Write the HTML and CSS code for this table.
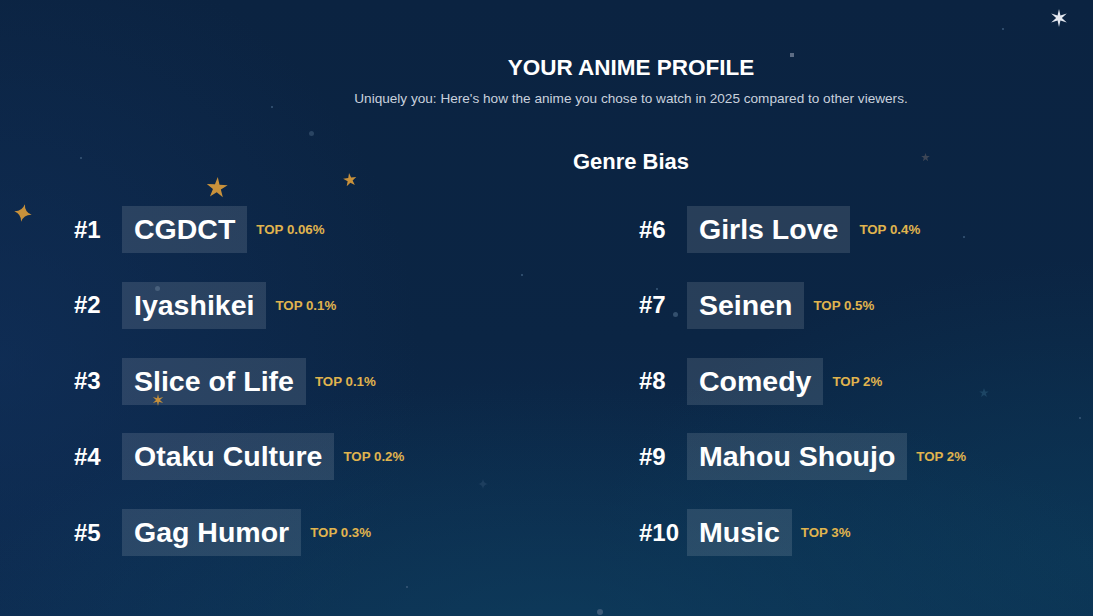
FILE: index.html
```html
<!DOCTYPE html>
<html lang="en">
<head>
<meta charset="utf-8">
<title>Your Anime Profile</title>
<link rel="stylesheet" href="styles.css">
</head>
<body>
<div class="page">
  <div class="sky" aria-hidden="true">
    <svg class="deco star5 g1" viewBox="-10 -10 20 20"><polygon points="0,-10 2.1,-3.2 9.51,-3.09 3.6,1.2 5.88,8.09 0,3.8 -5.88,8.09 -3.6,1.2 -9.51,-3.09 -2.1,-3.2"/></svg>
    <svg class="deco star5 g2" viewBox="-10 -10 20 20"><polygon points="0,-10 2.1,-3.2 9.51,-3.09 3.6,1.2 5.88,8.09 0,3.8 -5.88,8.09 -3.6,1.2 -9.51,-3.09 -2.1,-3.2"/></svg>
    <svg class="deco spark g3" viewBox="-10 -10 20 20"><path d="M0 -10 Q1.4 -1.4 10 0 Q1.4 1.4 0 10 Q-1.4 1.4 -10 0 Q-1.4 -1.4 0 -10Z"/></svg>
    <svg class="deco star6 w1" viewBox="-10 -10 20 20"><polygon points="0,-10 1.6,-2.8 8.66,-5 3.2,0 8.66,5 1.6,2.8 0,10 -1.6,2.8 -8.66,5 -3.2,0 -8.66,-5 -1.6,-2.8"/></svg>
    <svg class="deco star5 d1" viewBox="-10 -10 20 20"><polygon points="0,-10 2.35,-3.24 9.51,-3.09 3.8,1.24 5.88,8.09 0,4 -5.88,8.09 -3.8,1.24 -9.51,-3.09 -2.35,-3.24"/></svg>
    <svg class="deco star5 d2" viewBox="-10 -10 20 20"><polygon points="0,-10 2.35,-3.24 9.51,-3.09 3.8,1.24 5.88,8.09 0,4 -5.88,8.09 -3.8,1.24 -9.51,-3.09 -2.35,-3.24"/></svg>
    <svg class="deco spark d3" viewBox="-10 -10 20 20"><path d="M0 -10 Q1.4 -1.4 10 0 Q1.4 1.4 0 10 Q-1.4 1.4 -10 0 Q-1.4 -1.4 0 -10Z"/></svg>
    <svg class="deco star6 d4" viewBox="-10 -10 20 20"><polygon points="0,-10 1.6,-2.8 8.66,-5 3.2,0 8.66,5 1.6,2.8 0,10 -1.6,2.8 -8.66,5 -3.2,0 -8.66,-5 -1.6,-2.8"/></svg>
    <span class="dot p1"></span><span class="dot p2"></span><span class="dot p3"></span>
    <span class="dot p4"></span><span class="dot p5"></span><span class="dot p6"></span>
    <span class="dot p7"></span><span class="dot p8"></span><span class="dot p9"></span>
    <span class="dot p10"></span><span class="dot p11"></span><span class="dot p12"></span>
    <span class="dot p13"></span>
  </div>

  <header class="head">
    <h1 class="title">YOUR ANIME PROFILE</h1>
    <p class="subtitle">Uniquely you: Here's how the anime you chose to watch in 2025 compared to other viewers.</p>
    <h2 class="section">Genre Bias</h2>
  </header>

  <main class="genres">
    <ol class="col">
      <li class="row"><span class="rank">#1</span><span class="name">CGDCT</span><span class="top">TOP 0.06%</span></li>
      <li class="row"><span class="rank">#2</span><span class="name">Iyashikei</span><span class="top">TOP 0.1%</span></li>
      <li class="row"><span class="rank">#3</span><span class="name">Slice of Life</span><span class="top">TOP 0.1%</span></li>
      <li class="row"><span class="rank">#4</span><span class="name">Otaku Culture</span><span class="top">TOP 0.2%</span></li>
      <li class="row"><span class="rank">#5</span><span class="name">Gag Humor</span><span class="top">TOP 0.3%</span></li>
    </ol>
    <ol class="col">
      <li class="row"><span class="rank">#6</span><span class="name">Girls Love</span><span class="top">TOP 0.4%</span></li>
      <li class="row"><span class="rank">#7</span><span class="name">Seinen</span><span class="top">TOP 0.5%</span></li>
      <li class="row"><span class="rank">#8</span><span class="name">Comedy</span><span class="top">TOP 2%</span></li>
      <li class="row"><span class="rank">#9</span><span class="name">Mahou Shoujo</span><span class="top">TOP 2%</span></li>
      <li class="row"><span class="rank">#10</span><span class="name">Music</span><span class="top">TOP 3%</span></li>
    </ol>
  </main>
</div>
</body>
</html>
```

FILE: styles.css
```css
* { box-sizing: border-box; }

html, body {
  margin: 0;
  padding: 0;
  width: 1093px;
  height: 616px;
  overflow: hidden;
  font-family: "Liberation Sans", Arial, sans-serif;
  color: #ffffff;
}

.page {
  position: relative;
  width: 1093px;
  height: 616px;
  overflow: hidden;
  background:
    radial-gradient(ellipse 620px 260px at 560px 640px, rgba(14, 70, 100, 0.55), rgba(14, 70, 100, 0) 100%),
    radial-gradient(ellipse 500px 300px at 1093px 560px, rgba(12, 62, 92, 0.6), rgba(12, 62, 92, 0) 100%),
    radial-gradient(ellipse 420px 420px at 0px 360px, rgba(18, 50, 96, 0.55), rgba(18, 50, 96, 0) 100%),
    linear-gradient(180deg, #0b2341 0%, #0b2544 55%, #0c2b4e 100%);
}

/* decorative sky layer */
.sky {
  position: absolute;
  inset: 0;
  pointer-events: none;
  z-index: 2;
}

.deco { position: absolute; display: block; }
.g1, .g2, .g3, .d4 { fill: #c8913b; }
.g1 { left: 206px; top: 177px; width: 22px; height: 22px; transform: rotate(4deg); }
.g2 { left: 343px; top: 173px; width: 14px; height: 14px; transform: rotate(-8deg); }
.g3 { left: 14px; top: 203px; width: 18px; height: 20px; transform: rotate(12deg); }
.d4 { left: 152px; top: 394px; width: 12px; height: 12px; }
.w1 { left: 1050px; top: 7px; width: 18px; height: 22px; fill: #e4e8f0; }
.d1 { left: 921px; top: 153px; width: 9px; height: 9px; fill: #3d4656; }
.d2 { left: 979px; top: 388px; width: 10px; height: 10px; fill: #1d4564; }
.d3 { left: 478px; top: 479px; width: 10px; height: 10px; fill: #1d3e5e; }

.dot {
  position: absolute;
  border-radius: 50%;
  background: #3a5878;
}
.p1 { left: 790px; top: 53px; width: 4px; height: 4px; background: #5c6c84; border-radius: 0; }
.p2 { left: 309px; top: 131px; width: 5px; height: 5px; background: #2a4462; }
.p3 { left: 271px; top: 106px; width: 2px; height: 2px; }
.p4 { left: 155px; top: 286px; width: 5px; height: 5px; background: #48607c; }
.p5 { left: 673px; top: 312px; width: 5px; height: 5px; background: #34506e; }
.p6 { left: 1079px; top: 417px; width: 2px; height: 2px; }
.p7 { left: 597px; top: 609px; width: 6px; height: 6px; background: #3c5a78; }
.p8 { left: 406px; top: 586px; width: 2px; height: 2px; }
.p9 { left: 521px; top: 274px; width: 2px; height: 2px; }
.p10 { left: 656px; top: 288px; width: 2px; height: 2px; }
.p11 { left: 963px; top: 236px; width: 2px; height: 2px; }
.p12 { left: 80px; top: 157px; width: 2px; height: 2px; }
.p13 { left: 1002px; top: 28px; width: 2px; height: 2px; }

/* header */
.head {
  position: relative;
  z-index: 1;
  padding: 55px 0 0 169px;
  text-align: center;
}

.title {
  margin: 0;
  font-size: 22.5px;
  line-height: 26px;
  font-weight: 700;
}

.subtitle {
  margin: 9px 0 0;
  font-size: 13.6px;
  line-height: 18px;
  color: #c9d1dd;
}

.section {
  margin: 41px 0 0;
  font-size: 22px;
  line-height: 26px;
  font-weight: 700;
}

/* genre grid */
.genres {
  position: relative;
  z-index: 1;
  display: grid;
  grid-template-columns: 565px 1fr;
  padding: 31px 0 0 74px;
}

.col {
  list-style: none;
  margin: 0;
  padding: 0;
  display: flex;
  flex-direction: column;
  gap: 28.75px;
}

.row {
  display: flex;
  align-items: center;
  height: 47px;
}

.rank {
  width: 48px;
  flex: none;
  font-size: 24px;
  font-weight: 700;
  line-height: 28px;
  white-space: nowrap;
}

.name {
  padding: 7px 12px;
  font-size: 28.5px;
  line-height: 33px;
  font-weight: 700;
  background: rgba(255, 255, 255, 0.12);
  white-space: nowrap;
}

.top {
  margin-left: 9px;
  font-size: 13.3px;
  font-weight: 700;
  color: #e0b44e;
  white-space: nowrap;
}
```
